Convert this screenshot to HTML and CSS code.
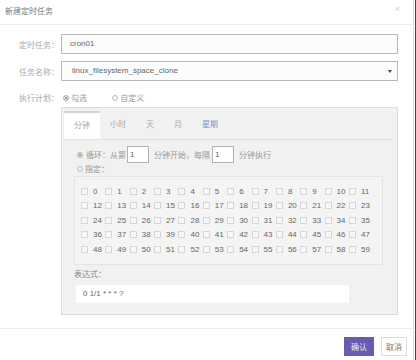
FILE: index.html
```html
<!DOCTYPE html>
<html>
<head>
	<meta charset="utf-8">
	<link rel="stylesheet" href="styles.css">
</head>
<body>
	<div class="page">
		<div class="dialog">
			<div class="header">
				<span class="title">新建定时任务</span>
				<span class="close">×</span>
			</div>
			<div class="body">
				<div class="row">
					<label class="label">定时任务：</label>
					<div class="input">cron01</div>
				</div>
				<div class="row">
					<label class="label">任务名称：</label>
					<div class="input select">linux_filesystem_space_clone<span class="caret"></span></div>
				</div>
				<div class="row plan">
					<label class="label">执行计划：</label>
					<div class="plan-body">
						<div class="modes">
							<span class="radio checked"></span>勾选
							<span class="radio custom"></span>自定义
						</div>
						<div class="panel">
							<ul class="tabs">
								<li class="active">分钟</li>
								<li>小时</li>
								<li>天</li>
								<li>月</li>
								<li class="hover">星期</li>
							</ul>
							<div class="line loop">
								<span class="radio checked"></span>循环：从第<span class="num">1</span><span class="gap">分钟开始，每隔</span><span class="num">1</span><span class="gap">分钟执行</span>
							</div>
							<div class="line pick"><span class="radio"></span>指定：</div>
							<div class="minutes">
								<span class="cell"><i></i>0</span><span class="cell"><i></i>1</span><span class="cell"><i></i>2</span><span class="cell"><i></i>3</span>
								<span class="cell"><i></i>4</span><span class="cell"><i></i>5</span><span class="cell"><i></i>6</span><span class="cell"><i></i>7</span>
								<span class="cell"><i></i>8</span><span class="cell"><i></i>9</span><span class="cell"><i></i>10</span><span class="cell"><i></i>11</span>
								<span class="cell"><i></i>12</span><span class="cell"><i></i>13</span><span class="cell"><i></i>14</span><span class="cell"><i></i>15</span>
								<span class="cell"><i></i>16</span><span class="cell"><i></i>17</span><span class="cell"><i></i>18</span><span class="cell"><i></i>19</span>
								<span class="cell"><i></i>20</span><span class="cell"><i></i>21</span><span class="cell"><i></i>22</span><span class="cell"><i></i>23</span>
								<span class="cell"><i></i>24</span><span class="cell"><i></i>25</span><span class="cell"><i></i>26</span><span class="cell"><i></i>27</span>
								<span class="cell"><i></i>28</span><span class="cell"><i></i>29</span><span class="cell"><i></i>30</span><span class="cell"><i></i>31</span>
								<span class="cell"><i></i>32</span><span class="cell"><i></i>33</span><span class="cell"><i></i>34</span><span class="cell"><i></i>35</span>
								<span class="cell"><i></i>36</span><span class="cell"><i></i>37</span><span class="cell"><i></i>38</span><span class="cell"><i></i>39</span>
								<span class="cell"><i></i>40</span><span class="cell"><i></i>41</span><span class="cell"><i></i>42</span><span class="cell"><i></i>43</span>
								<span class="cell"><i></i>44</span><span class="cell"><i></i>45</span><span class="cell"><i></i>46</span><span class="cell"><i></i>47</span>
								<span class="cell"><i></i>48</span><span class="cell"><i></i>49</span><span class="cell"><i></i>50</span><span class="cell"><i></i>51</span>
								<span class="cell"><i></i>52</span><span class="cell"><i></i>53</span><span class="cell"><i></i>54</span><span class="cell"><i></i>55</span>
								<span class="cell"><i></i>56</span><span class="cell"><i></i>57</span><span class="cell"><i></i>58</span><span class="cell"><i></i>59</span>
							</div>
							<div class="expr-label">表达式：</div>
							<div class="expr">0 1/1 * * * ?</div>
						</div>
					</div>
				</div>
			</div>
			<div class="footer">
				<button class="btn primary">确认</button>
				<button class="btn">取消</button>
			</div>
		</div>
	</div>
</body>
</html>
```

FILE: styles.css
```css
body {
	margin: 0;
	background: #fff;
	font-family: "Liberation Sans", "Noto Sans CJK SC", sans-serif;
	font-size: 8px;
	color: #999;
}

.page {
	width: 415px;
	height: 360px;
	border-right: 1px solid #444;
}

.dialog {
	width: 413px;
	height: 360px;
	border-right: 1px solid #ddd;
}

.header {
	display: flex;
	justify-content: space-between;
	height: 24px;
	border-bottom: 1px solid #eee;
	padding: 0 13px 0 5px;
}

.title {
	line-height: 24px;
	color: #777;
}

.close {
	font-size: 9px;
	line-height: 18px;
	color: #ccc;
}

.body {
	height: 303px;
	padding-top: 9px;
	box-sizing: border-box;
}

.row {
	display: flex;
	align-items: center;
	margin-bottom: 7px;
}

.label {
	width: 61px;
	padding-left: 19px;
	box-sizing: border-box;
	color: #aaa;
}

.input {
	width: 337px;
	height: 20px;
	box-sizing: border-box;
	border: 1px solid #b8b8b8;
	background: #fbfdfc;
	padding-left: 8px;
	line-height: 18px;
	color: #666;
}

.select {
	display: flex;
	justify-content: space-between;
	align-items: center;
	padding-right: 5px;
	padding-left: 10px;
}

.caret {
	width: 0;
	height: 0;
	border-left: 2px solid transparent;
	border-right: 2px solid transparent;
	border-top: 3px solid #444;
}

.plan {
	align-items: flex-start;
	margin-top: 9px;
}

.plan .label {
	line-height: 17px;
}

.modes {
	height: 17px;
	line-height: 17px;
	padding-left: 2px;
}

.radio {
	display: inline-block;
	width: 4px;
	height: 4px;
	border: 1px solid #bbb;
	border-radius: 50%;
	vertical-align: middle;
	margin: -1px 2px 0 0;
}

.radio.checked {
	background: #777;
	box-shadow: inset 0 0 0 1px #fff;
}

.radio.custom {
	margin-left: 23px;
}

.panel {
	width: 337px;
	height: 208px;
	box-sizing: border-box;
	background: #f1f1f1;
	border: 1px solid #dcdcdc;
	padding: 3px 5px 0 2px;
}

.tabs {
	display: flex;
	list-style: none;
	margin: 0;
	padding: 0;
	height: 28px;
	border-bottom: 1px solid #e0e0e0;
}

.tabs li {
	padding: 0 10px;
	line-height: 28px;
	color: #aaa;
}

.tabs li.active {
	background: #fff;
	border-top: 2px solid #d4d4d4;
	line-height: 26px;
}

.tabs li.hover {
	color: #7b93c2;
}

.line {
	padding-left: 13px;
}

.loop {
	display: flex;
	align-items: center;
	height: 17px;
	margin-top: 6px;
}

.loop .radio {
	margin: 0 3px 0 0;
}

.num {
	width: 22px;
	height: 17px;
	box-sizing: border-box;
	background: #fff;
	border: 1px solid #b0b0b0;
	padding-left: 2px;
	line-height: 15px;
	color: #666;
	margin-left: 1px;
}

.gap {
	margin: 0 1px 0 5px;
}

.pick {
	line-height: 12px;
	margin-top: 1px;
}

.minutes {
	display: grid;
	grid-template-columns: repeat(12, 24.36px);
	grid-auto-rows: 14.5px;
	width: 309px;
	height: 89px;
	box-sizing: border-box;
	margin: 0 0 0 10px;
	padding: 7px 0 0 6px;
	border: 1px solid #e4e4e4;
	background: #f4f4f4;
}

.cell {
	display: flex;
	align-items: center;
	color: #666;
}

.cell i {
	width: 5px;
	height: 5px;
	border: 1px solid #d6d6d6;
	background: #f8f8f8;
	margin-right: 5px;
}

.expr-label {
	margin: 4px 0 0 10px;
	line-height: 12px;
	color: #888;
}

.expr {
	width: 273px;
	height: 18px;
	box-sizing: border-box;
	margin: 4px 0 0 12px;
	padding-left: 7px;
	background: #fff;
	line-height: 18px;
	color: #666;
}

.footer {
	display: flex;
	justify-content: flex-end;
	gap: 7px;
	border-top: 1px solid #eee;
	padding: 8px 6px 0 0;
}

.btn {
	height: 19px;
	width: 26px;
	padding: 0;
	font-family: inherit;
	font-size: 8px;
	background: #fff;
	border: 1px solid #ddd;
	color: #777;
}

.btn.primary {
	width: 30px;
	background: #6a5bb0;
	border-color: #6a5bb0;
	color: #eee;
}
```
